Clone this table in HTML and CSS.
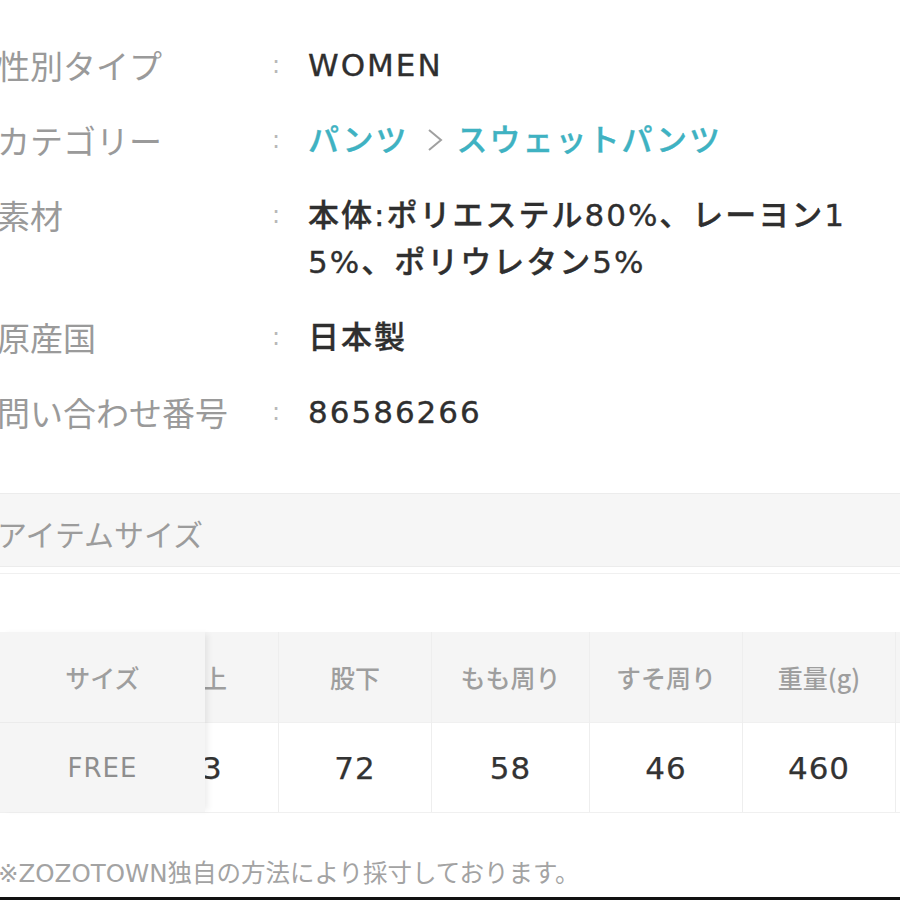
FILE: index.html
```html
<!DOCTYPE html>
<html lang="ja">
<head>
<meta charset="utf-8">
<link rel="stylesheet" href="styles.css">
</head>
<body>
<div class="page">
  <dl class="specs">
    <div class="spec"><dt>性別タイプ</dt><dd class="colon">:</dd><dd class="val">WOMEN</dd></div>
    <div class="spec"><dt>カテゴリー</dt><dd class="colon">:</dd><dd class="val"><span class="link">パンツ</span><span class="sep"><svg width="16" height="26" viewBox="0 0 16 26"><polyline points="2,3 14,13 2,23" fill="none" stroke="#a0a0a0" stroke-width="2"/></svg></span><span class="link">スウェットパンツ</span></dd></div>
    <div class="spec"><dt>素材</dt><dd class="colon">:</dd><dd class="val">本体:ポリエステル80%、レーヨン15%、ポリウレタン5%</dd></div>
    <div class="spec"><dt>原産国</dt><dd class="colon">:</dd><dd class="val">日本製</dd></div>
    <div class="spec"><dt>問い合わせ番号</dt><dd class="colon">:</dd><dd class="val">86586266</dd></div>
  </dl>

  <div class="section-head">アイテムサイズ</div>
  <div class="section-gap"></div>

  <div class="size-table">
    <div class="fixed-col">
      <div class="cell head">サイズ</div>
      <div class="cell body free">FREE</div>
    </div>
    <div class="scroll-area">
      <div class="scroll-inner">
        <div class="col w152">
          <div class="cell head">股上</div>
          <div class="cell body">33</div>
        </div>
        <div class="col w152">
          <div class="cell head">股下</div>
          <div class="cell body">72</div>
        </div>
        <div class="col w158">
          <div class="cell head">もも周り</div>
          <div class="cell body">58</div>
        </div>
        <div class="col w152">
          <div class="cell head">すそ周り</div>
          <div class="cell body">46</div>
        </div>
        <div class="col w152">
          <div class="cell head">重量(g)</div>
          <div class="cell body">460</div>
        </div>
        <div class="col w152">
          <div class="cell head"></div>
          <div class="cell body"></div>
        </div>
      </div>
    </div>
  </div>

  <p class="note">※ZOZOTOWN独自の方法により採寸しております。</p>
</div>
<div class="edge"></div>
</body>
</html>
```

FILE: styles.css
```css
html, body {
  margin: 0;
  padding: 0;
  background: #fff;
}
body {
  width: 900px;
  height: 900px;
  overflow: hidden;
  position: relative;
  font-family: "DejaVu Sans", "Noto Sans CJK JP", sans-serif;
}
.page {
  width: 900px;
}
.specs {
  margin: 0;
  padding: 42px 0 0 0;
  display: flex;
  flex-direction: column;
  gap: 28px;
}
.spec {
  display: grid;
  grid-template-columns: 275px 36px 560px;
  margin-left: -3px;
  line-height: 47px;
}
.spec dt {
  color: #9a9a9a;
  font-weight: 400;
  font-size: 33px;
  white-space: nowrap;
  font-family: "Noto Sans CJK JP", sans-serif;
}
.spec dd {
  margin: 0;
}
.colon {
  color: #b8b8b8;
  font-size: 24px;
}
.val {
  color: #2f2f2f;
  font-weight: 500;
  font-size: 31px;
  letter-spacing: 2px;
  word-break: break-all;
  -webkit-text-stroke: 0.35px currentColor;
}
.link {
  color: #3fb2c2;
}
.sep {
  display: inline-block;
  margin: 0 14px 0 18px;
  vertical-align: -2px;
}
.sep svg {
  display: block;
}
.section-head {
  margin-top: 57px;
  height: 74px;
  box-sizing: border-box;
  border-top: 1px solid #ececec;
  border-bottom: 1px solid #ececec;
  background: #f6f6f6;
  color: #9c9c9c;
  font-family: "Noto Sans CJK JP", sans-serif;
  font-size: 30px;
  line-height: 72px;
  padding-top: 3px;
  margin-left: -3px;
}
.section-gap {
  height: 6px;
  border-bottom: 1px solid #f0f0f0;
}
.size-table {
  margin-top: 58px;
  display: flex;
  position: relative;
  border-bottom: 1px solid #f0f0f0;
}
.fixed-col {
  width: 205px;
  flex: none;
  position: relative;
  z-index: 2;
  background: #f5f5f5;
  box-shadow: 5px 0 6px -2px rgba(0, 0, 0, 0.07);
}
.scroll-area {
  flex: 1;
  overflow: hidden;
}
.scroll-inner {
  display: flex;
  margin-left: -79px;
}
.col {
  flex: none;
  border-right: 1px solid #eeeeee;
}
.w152 { width: 152px; }
.w158 { width: 157px; }
.cell {
  height: 90px;
  display: flex;
  align-items: center;
  justify-content: center;
}
.cell.head {
  background: #f5f5f5;
  color: #9e9e9e;
  font-family: "Noto Sans CJK JP", sans-serif;
  font-size: 25px;
  font-weight: 500;
}
.cell.body {
  background: #fff;
  color: #333;
  font-size: 31px;
  letter-spacing: 1px;
  font-weight: 400;
  border-top: 1px solid #f0f0f0;
  box-sizing: border-box;
  -webkit-text-stroke: 0.25px currentColor;
}
.fixed-col .cell.body {
  background: #f5f5f5;
  color: #8e8e8e;
  font-size: 26px;
  border-top: 1px solid #ebebeb;
  -webkit-text-stroke: 0;
}
.note {
  margin: 44px 0 0 -2px;
  color: #a3a3a3;
  font-size: 24.5px;
  line-height: 34px;
}
.edge {
  position: absolute;
  left: 0;
  right: 0;
  bottom: 0;
  height: 3px;
  background: #111;
}
```
